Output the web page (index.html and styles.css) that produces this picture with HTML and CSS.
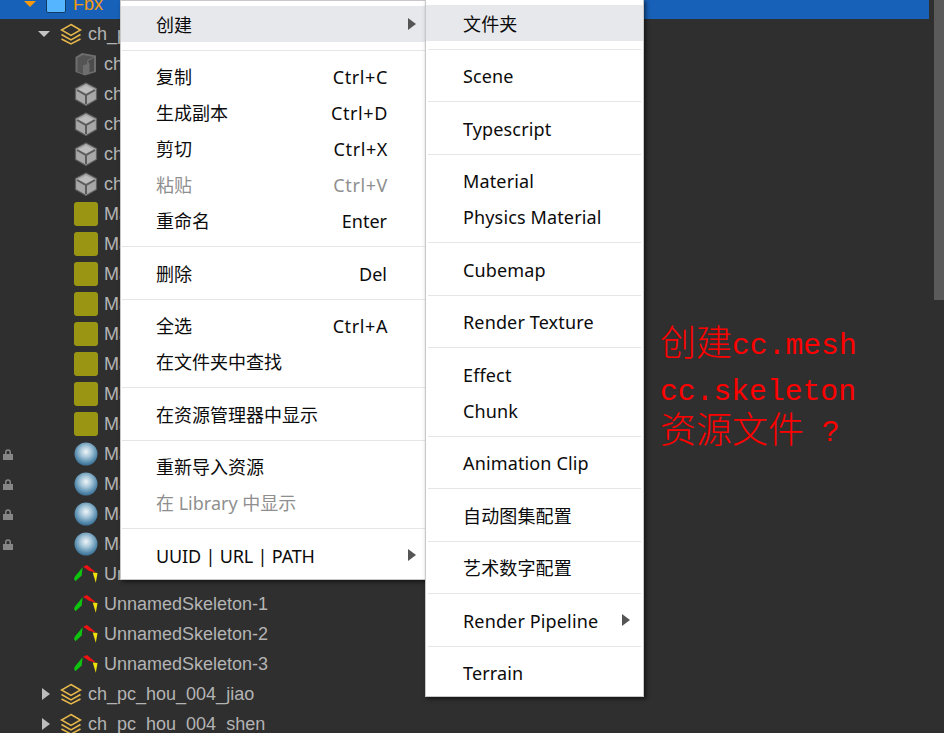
FILE: index.html
```html
<!DOCTYPE html>
<html lang="zh-CN">
<head>
<meta charset="utf-8">
<title>Assets</title>
<link rel="stylesheet" href="styles.css">
</head>
<body>
<svg class="defs" width="0" height="0" aria-hidden="true">
  <defs>
    <radialGradient id="ball" cx="50%" cy="40%" r="58%">
      <stop offset="0" stop-color="#f0f5f8"/>
      <stop offset=".4" stop-color="#a9c8da"/>
      <stop offset=".8" stop-color="#5b8fb0"/>
      <stop offset="1" stop-color="#3f7397"/>
    </radialGradient>
    <symbol id="layers" viewBox="0 0 22 22">
      <path d="M11 1.500 20.500 7 11 12.500 1.500 7Z M1.500 11.500 11 17 20.500 11.500 M1.500 16 11 21 20.500 16" fill="none" stroke="#e8b84a" stroke-width="1.500" stroke-linejoin="miter"/>
    </symbol>
    <symbol id="cube" viewBox="0 0 24 24">
      <path d="M12 1 22.500 6.500V17.500L12 23.500 1.500 17.500V6.500Z" fill="#a8a8a8" stroke="#5f5f5f" stroke-width="1.200"/>
      <path d="M12 3.500 19.500 7.500 12 11.500 4.500 7.500Z" fill="#bdbdbd"/>
      <path d="M3 8 12 13 21 8 M12 13V22" fill="none" stroke="#5c5c5c" stroke-width="2"/>
    </symbol>
    <symbol id="cube-dark" viewBox="0 0 24 24">
      <path d="M8 1 22 3.500V20L11 23.500 1.500 20V5Z" fill="#6e6e6e"/>
      <path d="M3.500 6 9 3 20 5 13.500 8 13 12 9 13.500 9 22 3.500 19.500Z" fill="#545454"/>
      <path d="M14 9 20 6V19L15.500 20.500V12Z" fill="#4c4c4c"/>
    </symbol>
    <symbol id="bones" viewBox="0 0 25 24">
      <path d="M9 5 8 13.500 1.500 19.500 0 17 1 14.500Z" fill="#0fc40f"/>
      <path d="M9.500 4.500 13.500 2.500 23 10.500 15.500 8.500Z" fill="#ee1212"/>
      <path d="M19.500 10.500 24.500 11 22.700 21Z" fill="#f2e20c"/>
    </symbol>
    <symbol id="lock" viewBox="0 0 10 11">
      <path d="M0 5H10V11H0Z M2 5V3.200A3 3 0 0 1 8 3.200V5H6.500V3.200A1.500 1.500 0 0 0 3.500 3.200V5Z" fill="#868686"/>
    </symbol>
  </defs>
</svg>

<div class="page">
  <div class="tree">
    <div class="row row-active"><span class="tri tri-open tri-orange tri-l0"></span><span class="folder"></span><span class="name name-active">Fbx</span></div>
    <div class="row"><span class="tri tri-open tri-l1"></span><svg class="ico-layers"><use href="#layers"/></svg><span class="name">ch_pc_hou_004</span></div>
    <div class="row row-leaf"><svg class="ico"><use href="#cube-dark"/></svg><span class="name">ch_pc_hou_004</span></div>
    <div class="row row-leaf"><svg class="ico"><use href="#cube"/></svg><span class="name">ch_pc_hou_004</span></div>
    <div class="row row-leaf"><svg class="ico"><use href="#cube"/></svg><span class="name">ch_pc_hou_004</span></div>
    <div class="row row-leaf"><svg class="ico"><use href="#cube"/></svg><span class="name">ch_pc_hou_004</span></div>
    <div class="row row-leaf"><svg class="ico"><use href="#cube"/></svg><span class="name">ch_pc_hou_004</span></div>
    <div class="row row-leaf"><span class="swatch"></span><span class="name">Material</span></div>
    <div class="row row-leaf"><span class="swatch"></span><span class="name">Material</span></div>
    <div class="row row-leaf"><span class="swatch"></span><span class="name">Material</span></div>
    <div class="row row-leaf"><span class="swatch"></span><span class="name">Material</span></div>
    <div class="row row-leaf"><span class="swatch"></span><span class="name">Material</span></div>
    <div class="row row-leaf"><span class="swatch"></span><span class="name">Material</span></div>
    <div class="row row-leaf"><span class="swatch"></span><span class="name">Material</span></div>
    <div class="row row-leaf"><span class="swatch"></span><span class="name">Material</span></div>
    <div class="row row-locked"><svg class="ico-lock"><use href="#lock"/></svg><svg class="ico ico-ball" viewBox="0 0 24 24"><circle cx="12" cy="12" r="11.500" fill="url(#ball)"/></svg><span class="name">Material</span></div>
    <div class="row row-locked"><svg class="ico-lock"><use href="#lock"/></svg><svg class="ico ico-ball" viewBox="0 0 24 24"><circle cx="12" cy="12" r="11.500" fill="url(#ball)"/></svg><span class="name">Material</span></div>
    <div class="row row-locked"><svg class="ico-lock"><use href="#lock"/></svg><svg class="ico ico-ball" viewBox="0 0 24 24"><circle cx="12" cy="12" r="11.500" fill="url(#ball)"/></svg><span class="name">Material</span></div>
    <div class="row row-locked"><svg class="ico-lock"><use href="#lock"/></svg><svg class="ico ico-ball" viewBox="0 0 24 24"><circle cx="12" cy="12" r="11.500" fill="url(#ball)"/></svg><span class="name">Material</span></div>
    <div class="row row-leaf"><svg class="ico"><use href="#bones"/></svg><span class="name">UnnamedSkeleton-0</span></div>
    <div class="row row-leaf"><svg class="ico"><use href="#bones"/></svg><span class="name">UnnamedSkeleton-1</span></div>
    <div class="row row-leaf"><svg class="ico"><use href="#bones"/></svg><span class="name">UnnamedSkeleton-2</span></div>
    <div class="row row-leaf"><svg class="ico"><use href="#bones"/></svg><span class="name">UnnamedSkeleton-3</span></div>
    <div class="row"><span class="tri tri-closed"></span><svg class="ico-layers"><use href="#layers"/></svg><span class="name">ch_pc_hou_004_jiao</span></div>
    <div class="row"><span class="tri tri-closed"></span><svg class="ico-layers"><use href="#layers"/></svg><span class="name">ch_pc_hou_004_shen</span></div>
  </div>
  <div class="scrollbar"><div class="thumb"></div></div>
</div>

<div class="menu menu-main">
  <div class="item item-hover"><span>创建</span><span class="arrow"></span></div>
  <div class="sep"></div>
  <div class="item"><span>复制</span><span class="key">Ctrl+C</span></div>
  <div class="item"><span>生成副本</span><span class="key">Ctrl+D</span></div>
  <div class="item"><span>剪切</span><span class="key">Ctrl+X</span></div>
  <div class="item item-off"><span>粘贴</span><span class="key">Ctrl+V</span></div>
  <div class="item"><span>重命名</span><span>Enter</span></div>
  <div class="sep"></div>
  <div class="item"><span>删除</span><span>Del</span></div>
  <div class="sep"></div>
  <div class="item"><span>全选</span><span class="key">Ctrl+A</span></div>
  <div class="item"><span>在文件夹中查找</span></div>
  <div class="sep"></div>
  <div class="item"><span>在资源管理器中显示</span></div>
  <div class="sep"></div>
  <div class="item"><span>重新导入资源</span></div>
  <div class="item item-off"><span>在 Library 中显示</span></div>
  <div class="sep"></div>
  <div class="item"><span class="tight">UUID | URL | PATH</span><span class="arrow"></span></div>
</div>

<div class="menu menu-sub">
  <div class="item item-hover"><span>文件夹</span></div>
  <div class="sep"></div>
  <div class="item"><span>Scene</span></div>
  <div class="sep"></div>
  <div class="item"><span>Typescript</span></div>
  <div class="sep"></div>
  <div class="item"><span>Material</span></div>
  <div class="item"><span>Physics Material</span></div>
  <div class="sep"></div>
  <div class="item"><span>Cubemap</span></div>
  <div class="sep"></div>
  <div class="item"><span>Render Texture</span></div>
  <div class="sep"></div>
  <div class="item"><span>Effect</span></div>
  <div class="item"><span>Chunk</span></div>
  <div class="sep"></div>
  <div class="item"><span>Animation Clip</span></div>
  <div class="sep"></div>
  <div class="item"><span>自动图集配置</span></div>
  <div class="sep"></div>
  <div class="item"><span>艺术数字配置</span></div>
  <div class="sep"></div>
  <div class="item"><span>Render Pipeline</span><span class="arrow"></span></div>
  <div class="sep"></div>
  <div class="item"><span>Terrain</span></div>
</div>

<div class="note">
  <div class="note-line"><span class="note-zh">创建</span>cc.mesh</div>
  <div class="note-line">cc.skeleton</div>
  <div class="note-line note-last"><span class="note-zh">资源文件</span> ?</div>
</div>
</body>
</html>
```

FILE: styles.css
```css
* { box-sizing: border-box; }
html, body { margin: 0; height: 100%; overflow: hidden; background: #2f2f2f; }
body { position: relative; }
.defs { position: absolute; }

.page { display: flex; height: 733px; }

.tree {
  width: 929px;
  margin-top: -11px;
  font: 18px/30px "Liberation Sans", Arial, sans-serif;
  color: #b4b4b4;
}
.row { display: flex; align-items: center; height: 30px; white-space: nowrap; }
.row-active { background: #1861b8; padding-left: 24px; }
.row-leaf { padding-left: 74px; }
.row-locked { padding-left: 3px; }
.name { margin-left: 6px; }
.name-active { color: #f59a0e; margin-left: 7px; }

.tri { width: 0; height: 0; flex: none; }
.tri-open { border-left: 6px solid transparent; border-right: 6px solid transparent; border-top: 6px solid #c4c4c4; }
.tri-orange { border-top-color: #f59a0e; }
.tri-closed { margin-left: 42px; margin-right: 10px; border-top: 6px solid transparent; border-bottom: 6px solid transparent; border-left: 8px solid #bcbcbc; }
.tri-l1 { margin-left: 38px; margin-right: 10px; }
.tri-l0 { margin-right: 10px; }

.folder { width: 20px; height: 18px; background: #55b6ff; border: 1px solid #123a62; border-radius: 2px; flex: none; }

.ico { width: 24px; height: 24px; flex: none; }
.ico-layers { width: 22px; height: 22px; flex: none; }
.ico-lock { width: 10px; height: 11px; margin-right: 61px; flex: none; }
.swatch { width: 24px; height: 24px; background: #9a9614; border-radius: 3px; flex: none; }

.scrollbar { width: 15px; padding-left: 5px; flex: none; }
.thumb { height: 300px; background: #5a5a5a; }

.menu {
  position: absolute;
  padding: 5px 0 0;
  background: #fff;
  border: 1px solid #c8c8c8;
  box-shadow: 2px 2px 4px rgba(0, 0, 0, .55);
  font: 18px/36px "Noto Sans", "Noto Sans CJK SC", sans-serif;
  color: #0b0b0b;
}
.menu-main { left: 120px; top: 0; width: 306px; height: 580px; }
.menu-sub { left: 425px; top: -1px; width: 219px; height: 698px; letter-spacing: .14px; }

.item { display: flex; justify-content: space-between; align-items: center; height: 36px; padding: 1px 38px 0 35px; white-space: nowrap; }
.menu-sub .item { padding: 1px 13px 0 37px; }
.item-hover { background: #e7e8eb; }
.item-off { color: #8f8f8f; }
.key { letter-spacing: .6px; margin-right: -1px; }
.tight { letter-spacing: -.16px; }
.sep { height: 1px; margin: 7.750px 0 7.750px 1px; background: #e6e6e6; }
.menu-sub .sep { margin-left: 2px; margin-right: 2px; }

.arrow { width: 0; height: 0; margin-top: -1px; border-top: 6px solid transparent; border-bottom: 6px solid transparent; border-left: 8px solid #555; }
.menu-main .arrow { margin-right: -29px; }

.note {
  position: absolute;
  left: 660px;
  top: 323px;
  font-family: "Liberation Mono", monospace;
  font-size: 29.700px;
  color: #f00;
  white-space: nowrap;
}
.note-line { line-height: 46px; height: 46px; }
.note-last { line-height: 40px; height: 40px; margin-top: -2px; }
.note-zh { font-family: "Noto Sans CJK SC", sans-serif; font-size: 36px; font-weight: 300; line-height: 0; vertical-align: -2px; }
```
